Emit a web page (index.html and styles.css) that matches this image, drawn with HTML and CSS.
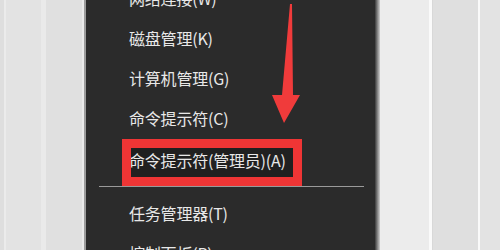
FILE: index.html
```html
<!DOCTYPE html>
<html lang="zh-CN">
<head>
<meta charset="UTF-8">
<meta name="viewport" content="width=device-width, initial-scale=1.0">
<title>Win+X 菜单</title>
<link rel="stylesheet" href="styles.css">
</head>
<body>
<div class="screen">
  <div class="desk-left">
    <div class="col col-a"></div>
    <div class="col col-b"></div>
    <div class="col col-c"></div>
  </div>

  <div class="menu">
    <div class="item">网络连接(W)</div>
    <div class="item">磁盘管理(K)</div>
    <div class="item">计算机管理(G)</div>
    <div class="item">命令提示符(C)</div>
    <div class="item item-admin">命令提示符(管理员)(A)</div>
    <div class="separator"></div>
    <div class="item">任务管理器(T)</div>
    <div class="item">控制面板(P)</div>

    <!-- annotation overlay -->
    <div class="mark-box"></div>
    <svg class="mark-arrow" width="40" height="130" viewBox="0 0 40 130">
      <polygon points="30,4 32,4 33,95 40,95 24,123 12,95 22,95" fill="#f03b3b"/>
    </svg>
  </div>

  <div class="desk-right">
    <div class="shadow"></div>
    <div class="pane pane-a"></div>
    <div class="pane pane-b"></div>
    <div class="pane pane-c"></div>
  </div>
</div>
</body>
</html>
```

FILE: styles.css
```css
body {
  margin: 0;
  overflow: hidden;
  font-family: "Noto Sans CJK SC", "Noto Sans", sans-serif;
}

.screen {
  display: flex;
  width: 500px;
  height: 250px;
  overflow: hidden;
}

.desk-left {
  display: flex;
  width: 86px;
  background-color: #e1e1e1;
}

.col {
  height: 100%;
}

.col-a {
  width: 41px;
  border-left: 4px solid #dedede;
  box-sizing: border-box;
  background: linear-gradient(90deg, #ebebeb 0, #ebebeb 2px, #e3e3e3 2px);
}

.col-b {
  width: 41px;
  background: linear-gradient(90deg, #eaeaea 0, #eaeaea 5px, #e0e0e0 5px);
}

.col-c {
  width: 4px;
  background: linear-gradient(90deg, #ebebeb 0, #ebebeb 2px, #9c9c9c 2px);
}

.menu {
  position: relative;
  width: 289px;
  background-color: #2b2b2b;
  color: #e8e8e8;
  font-size: 16px;
  padding-left: 43px;
  box-sizing: border-box;
  margin-top: -22px;
  height: 300px;
}

.item {
  height: 40px;
  line-height: 40px;
  white-space: nowrap;
  letter-spacing: -0.2px;
}

.item-admin {
  margin-top: 2px;
  background-color: #202020;
  margin-left: -2px;
  padding-left: 2px;
  margin-right: 82px;
}

.separator {
  height: 13px;
  margin-left: -30px;
  margin-right: 11px;
  background: linear-gradient(#9a9a9a, #9a9a9a) 0 6px / 100% 1px no-repeat;
}

.mark-box {
  position: absolute;
  left: 36px;
  top: 161px;
  width: 162px;
  height: 29px;
  border: 9px solid #ef3535;
  pointer-events: none;
}

.mark-arrow {
  position: absolute;
  left: 174px;
  top: 22px;
}

.desk-right {
  display: flex;
  flex: 1;
}

.shadow {
  width: 5px;
  background: linear-gradient(90deg, #3a3a3a, #cfcfcf);
}

.pane {
  height: 100%;
  box-sizing: border-box;
}

.pane-a {
  width: 49px;
  background-color: #ececec;
}

.pane-b {
  width: 49px;
  background-color: #dfdfdf;
  border-left: 3px solid #fafafa;
  box-shadow: inset 1px 0 0 #d8d8d8;
}

.pane-c {
  flex: 1;
  background-color: #e3e3e3;
  border-left: 2px solid #fafafa;
}
```
